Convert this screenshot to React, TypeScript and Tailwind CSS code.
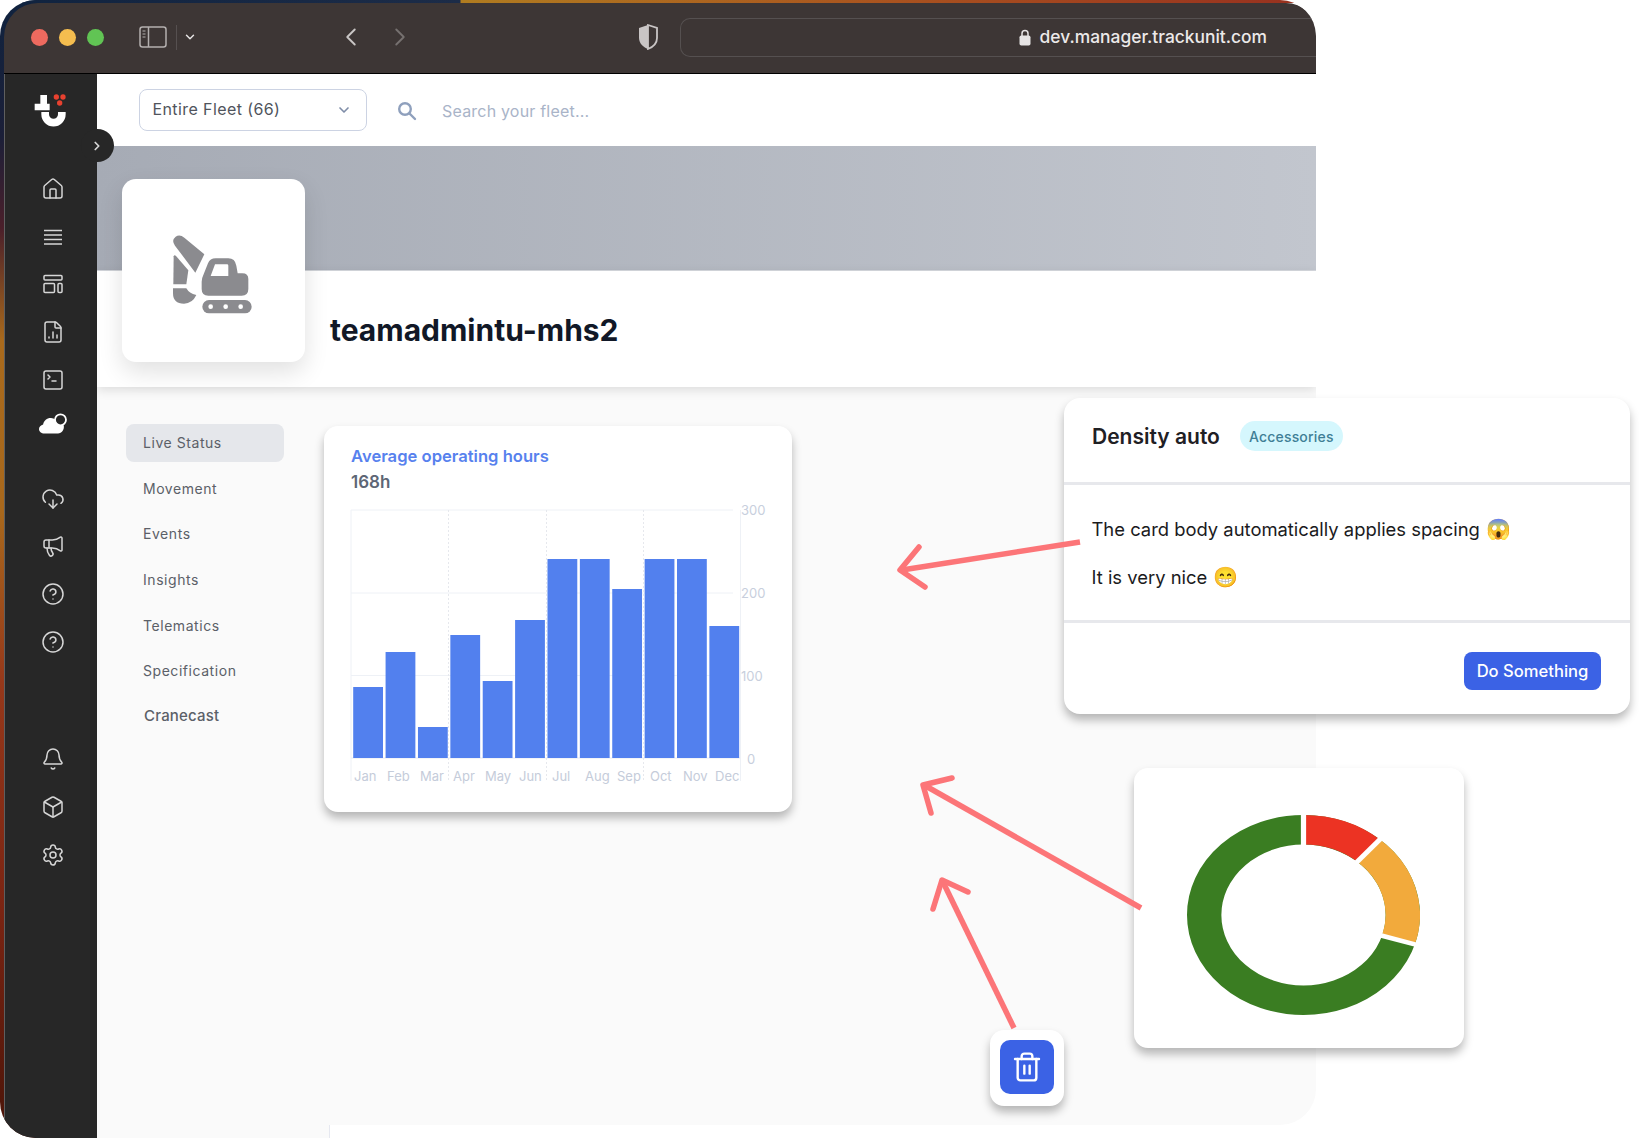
import {
  House,
  FileChartColumn,
  SquareTerminal,
  CloudDownload,
  Megaphone,
  CircleHelp,
  Bell,
  Box,
  Settings,
  ChevronDown,
  ChevronLeft,
  ChevronRight,
  Trash2,
} from "lucide-react";

const navItems = ["Movement", "Events", "Insights", "Telematics", "Specification"];

const bars = [71, 106, 31, 123, 77, 138, 199, 199, 169, 199, 199, 132];
const months = ["Jan", "Feb", "Mar", "Apr", "May", "Jun", "Jul", "Aug", "Sep", "Oct", "Nov", "Dec"];
const monthX = [354, 387, 420, 453, 485, 519, 552, 585, 617, 650, 683, 715];

const MenuLines = () => (
  <svg width="24" height="24" viewBox="0 0 24 24" fill="none" stroke="currentColor" strokeWidth="1.5">
    <path d="M3 5.5h18M3 10h18M3 14.5h18M3 19h18" />
  </svg>
);

const LayoutIcon = () => (
  <svg width="24" height="24" viewBox="0 0 24 24" fill="none" stroke="currentColor" strokeWidth="1.5">
    <rect x="3" y="3.5" width="18" height="4.5" rx="1" />
    <rect x="3" y="11.5" width="10.5" height="9" rx="1" />
    <rect x="17" y="11.5" width="4" height="9" rx="1" />
  </svg>
);

const CloudSun = () => (
  <svg width="30" height="24" viewBox="0 0 30 24" fill="none">
    <path
      d="M6.5 21.5C3.2 21.5 1 19.6 1 17c0-2.4 1.8-4 4.1-4.6C6 8.4 9.2 5.8 13 6c3.4.2 5.8 2.2 6.8 5 .8-.3 5.2-.3 6 2.8.7 3.6-2 7.7-5.8 7.7Z"
      fill="white"
    />
    <circle cx="22.5" cy="7.8" r="5.5" fill="#272727" stroke="white" strokeWidth="1.8" />
  </svg>
);

const Logo = () => (
  <svg width="40" height="40" viewBox="40 40 120 120">
    <path d="M62 46h20v26h8v20H45V72h17Z" fill="white" />
    <path d="M65 97H88V104A13.5 13.5 0 0 0 115 104V97H138V104A36.5 36.5 0 0 1 65 104Z" fill="white" />
    <circle cx="110" cy="52" r="8" fill="#e8412f" />
    <circle cx="130" cy="52" r="8" fill="#e8412f" />
    <circle cx="120" cy="70" r="8" fill="#e8412f" />
  </svg>
);

const Excavator = () => (
  <svg width="100" height="100" viewBox="0 0 300 300" fill="#8b8b8f">
    <path d="M48 62Q36 46 50 35Q62 26 76 38L136 88L109 143Z" />
    <path d="M44 94Q46 88 51 93L88 136L82 178H43Z" />
    <path d="M42 190H82Q90 205 112 210Q100 236 75 236Q42 236 42 205Z" />
    <path d="M128 170Q128 160 133 150L147 115Q153 100 170 100H208Q228 100 232 122L236 145H250Q268 145 268 162V192Q268 212 248 212H148Q128 212 128 192Z" />
    <path d="M168 118H204Q208 118 208 122V153H155Z" fill="white" />
    <rect x="130" y="225" width="148" height="40" rx="20" />
    <circle cx="155" cy="245" r="7" fill="white" />
    <circle cx="200" cy="245" r="7" fill="white" />
    <circle cx="245" cy="245" r="7" fill="white" />
  </svg>
);

const Sidebar = () => (
  <aside className="relative w-[93px] shrink-0 bg-[#272727] border-l border-[#5f5f5f] pl-[3px] flex flex-col items-center text-[#d6d6d6]">
    <div className="mt-[19px]">
      <Logo />
    </div>
    <div className="mt-[44px] flex flex-col items-center gap-[23.7px]">
      <House size={24} strokeWidth={1.5} />
      <MenuLines />
      <LayoutIcon />
      <FileChartColumn size={24} strokeWidth={1.5} />
      <SquareTerminal size={24} strokeWidth={1.5} />
    </div>
    <div className="mt-[20px] ml-[1px]">
      <CloudSun />
    </div>
    <div className="mt-[51px] flex flex-col items-center gap-[23.7px]">
      <CloudDownload size={24} strokeWidth={1.5} />
      <Megaphone size={24} strokeWidth={1.5} />
      <CircleHelp size={24} strokeWidth={1.5} />
      <CircleHelp size={24} strokeWidth={1.5} />
    </div>
    <div className="mt-[93.5px] flex flex-col items-center gap-[24px]">
      <Bell size={24} strokeWidth={1.5} />
      <Box size={24} strokeWidth={1.5} />
      <Settings size={24} strokeWidth={1.5} />
    </div>
  </aside>
);

const TitleBar = () => (
  <div className="ml-[4px] h-[71px] shrink-0 bg-[#3d3635] border-b border-black rounded-tl-[34px] rounded-tr-[30px] flex items-center pb-[2px] relative">
    <div className="ml-[27px] flex items-center gap-[11px]">
      <span className="w-[17px] h-[17px] rounded-full bg-[#ee6a5f]" />
      <span className="w-[17px] h-[17px] rounded-full bg-[#f5bd4f]" />
      <span className="w-[17px] h-[17px] rounded-full bg-[#61c454]" />
    </div>
    <svg className="ml-[35px]" width="28" height="22" viewBox="0 0 28 22" fill="none" stroke="#b4b0af" strokeWidth="1.5">
      <rect x="1" y="1" width="26" height="20" rx="2.5" />
      <path d="M9.5 1v20" />
      <path d="M3.5 5h3M3.5 8h3M3.5 11h3" strokeWidth="1.2" />
    </svg>
    <span className="ml-[9px] w-px h-[25px] bg-[#565050]" />
    <ChevronDown className="ml-[6px] text-[#e4e2e2]" size={14} strokeWidth={2.5} />
    <ChevronLeft className="ml-[139px] text-[#c9c6c5]" size={30} strokeWidth={1.5} />
    <ChevronRight className="ml-[19px] text-[#767170]" size={30} strokeWidth={1.5} />
    <svg className="ml-[222px]" width="22" height="26" viewBox="0 0 22 26">
      <path d="M11 1 2 4v10c0 5 4 9 9 11Z" fill="#c9c5c5" />
      <path d="M11 1l9 3v10c0 5-4 9-9 11Z" fill="none" stroke="#c9c5c5" strokeWidth="1.8" />
    </svg>
    <div className="ml-[21px] flex-1 h-[39px] border border-r-0 border-[#555050] rounded-l-[10px] flex items-center justify-end pr-[49px] gap-[9px]">
      <svg width="12" height="17" viewBox="0 0 12 17">
        <path d="M3 7V4.5a3 3 0 0 1 6 0V7" fill="none" stroke="#e6e4e4" strokeWidth="1.5" />
        <rect x="0.5" y="6.5" width="11" height="10" rx="1.8" fill="#e6e4e4" />
      </svg>
      <span className="mt-[1px] text-[17.4px] font-medium text-[#ece9e9]">dev.manager.trackunit.com</span>
    </div>
  </div>
);

const TopBar = () => (
  <div className="relative h-[72px] shrink-0 bg-white flex items-center pl-[42px]">
    <div className="w-[228px] h-[42px] mt-[-1px] border-[1.5px] border-[#ccd3e3] rounded-[8px] flex items-center justify-between pl-[12.5px] pr-[14px]">
      <span className="-mt-[1px] text-[16px] tracking-[0.4px] text-[#50545c]">Entire Fleet (66)</span>
      <ChevronDown className="text-[#7f8da8]" size={16} strokeWidth={2.5} />
    </div>
    <svg className="ml-[30px] mt-[2px]" width="20" height="20" viewBox="0 0 20 20" fill="none" stroke="#8fa0bd" strokeWidth="2.4">
      <circle cx="8" cy="8" r="5.8" />
      <path d="M12.5 12.5 18 18" strokeLinecap="round" />
    </svg>
    <span className="ml-[25px] mt-[2px] text-[16px] tracking-[0.2px] text-[#a9b4c8]">Search your fleet...</span>
  </div>
);

const BarChart = () => (
  <svg className="mt-[1px] ml-[16px]" width="450" height="295" viewBox="340 495 450 295" fontFamily="Inter, sans-serif" fontSize="13">
    {[510, 593, 675.5].map((y) => (
      <line key={y} x1="351" x2="733" y1={y} y2={y} stroke="#eef1f6" />
    ))}
    <line x1="351" x2="740" y1="758" y2="758" stroke="#e6eaf2" />
    <line x1="351" x2="351" y1="510" y2="781" stroke="#eef1f6" />
    <line x1="740.5" x2="740.5" y1="510" y2="781" stroke="#eef1f6" />
    {[448.5, 546.5, 643.5].map((x) => (
      <line key={x} x1={x} x2={x} y1="510" y2="781" stroke="#e6e8ed" strokeDasharray="2 2" />
    ))}
    {bars.map((h, i) => (
      <rect key={months[i]} x={353.2 + i * 32.38} y={758 - h} width="29.8" height={h} fill="#5280ee" />
    ))}
    {months.map((m, i) => (
      <text key={m} x={monthX[i]} y="781" fill="#c5ccda">
        {m}
      </text>
    ))}
    <text x="741" y="515" fill="#c8cfdd">300</text>
    <text x="741" y="598" fill="#c8cfdd">200</text>
    <text x="741" y="681" fill="#c8cfdd">100</text>
    <text x="747" y="764" fill="#c8cfdd">0</text>
  </svg>
);

const Donut = () => (
  <svg width="233" height="200" viewBox="0 0 200 200" preserveAspectRatio="none" fill="none">
    <circle cx="100" cy="100" r="85.25" stroke="#3a7d22" strokeWidth="29.5" />
    <path d="M100 14.75A85.25 85.25 0 0 1 155.9 35.6" stroke="#ec3323" strokeWidth="29.5" />
    <path d="M155.9 35.6A85.25 85.25 0 0 1 181.5 124.9" stroke="#f2aa3c" strokeWidth="29.5" />
    <g stroke="white" strokeWidth="4.5">
      <path d="M100 -2V32" />
      <path d="M144.6 48.5 169 20.4" />
      <path d="M165 120 198 130.2" />
    </g>
  </svg>
);

const Arrows = () => (
  <svg className="absolute inset-0 pointer-events-none" width="1639" height="1138" fill="none" stroke="#fc7578" strokeWidth="5.5" strokeLinecap="round" strokeLinejoin="round">
    <path d="M1080 542 902 570" strokeLinecap="butt" />
    <path d="M919 547 900 570 925 587" />
    <path d="M1141 908 924 785" strokeLinecap="butt" />
    <path d="M952 778 923 785 931 813" />
    <path d="M1014 1028 943 882" strokeLinecap="butt" />
    <path d="M968 892 942 880 933 909" />
  </svg>
);

export default function App() {
  return (
    <div className="relative w-[1639px] h-[1138px] bg-white overflow-hidden font-['Inter',sans-serif]">
      {/* browser window */}
      <div className="w-[1316px] h-[1138px] flex flex-col overflow-hidden rounded-t-[36px] rounded-bl-[36px] bg-no-repeat bg-[length:40px_100%] bg-[linear-gradient(180deg,#10233f_0%,#1b1f38_12%,#4a1f2a_20%,#a96a1c_30%,#a8681c_45%,#96381a_60%,#7a2412_80%,#4a1408_100%)]">
        <div className="h-[3px] shrink-0 bg-[linear-gradient(90deg,#10233f_0,#1c2c48_460px,#b07c20_461px,#a9521f_900px,#97301f_1316px)]" />
        <TitleBar />
        <div className="flex flex-1 pl-[4px] min-h-0">
          <Sidebar />
          <div className="relative w-[1219px] flex flex-col">
            <div className="h-[1051px] bg-[#fafafa] rounded-br-[36px] flex flex-col overflow-hidden">
              <TopBar />
              <div className="h-[125px] shrink-0 bg-[linear-gradient(90deg,#a6abb5,#c2c6ce)] border-b border-[#d5d8de]" />
              <div className="relative z-10 h-[116px] shrink-0 bg-white shadow-[0_3px_10px_rgba(0,0,0,0.12)] flex items-start">
                <div className="ml-[25px] -mt-[92px] w-[183px] h-[183px] shrink-0 bg-white rounded-[14px] shadow-[0_10px_25px_rgba(0,0,0,0.12)] flex items-center justify-center pr-[9px] pt-[8px]">
                  <Excavator />
                </div>
                <h1 className="ml-[25px] mt-[39px] text-[30px] leading-[40px] font-bold text-[#111827]">teamadmintu-mhs2</h1>
              </div>
              <div className="flex items-start">
                <nav className="ml-[29px] mt-[36.5px] w-[158px] flex flex-col gap-[7.7px] text-[14px] tracking-[0.55px] text-[#5b6068]">
                  <a className="h-[38px] rounded-[8px] bg-[#e5e7eb] pl-[17px] flex items-center">Live Status</a>
                  {navItems.map((item) => (
                    <a key={item} className="h-[38px] pl-[17px] flex items-center">
                      {item}
                    </a>
                  ))}
                  <a className="h-[38px] pl-[18px] flex items-center font-medium text-[15px] tracking-[0.2px]">Cranecast</a>
                </nav>
                <section className="ml-[40px] mt-[39px] w-[468px] h-[386px] bg-white rounded-[14px] shadow-[0_6px_10px_rgba(0,0,0,0.28)]">
                  <div className="pl-[27px] pt-[18px]">
                    <h2 className="text-[16.6px] leading-[24px] font-semibold text-[#5781ee]">Average operating hours</h2>
                    <p className="mt-[2px] text-[17px] leading-[24px] font-semibold text-[#5d6675]">168h</p>
                  </div>
                  <BarChart />
                </section>
              </div>
            </div>
            <div className="h-[13px] w-[233px] bg-[#fafafa] border-r border-[#e6e8f0]" />
            {/* sidebar collapse toggle */}
            <div className="absolute left-[-16.5px] top-[55px] z-20 w-[33px] h-[33px] rounded-full bg-[#272727] flex items-center justify-center pr-[1px] text-[#d6d6d6]">
              <ChevronRight size={14} strokeWidth={3} />
            </div>
          </div>
        </div>
      </div>

      {/* pasted cards */}
      <div className="absolute left-[1064px] top-[398px] w-[566px] h-[316px] bg-white rounded-[16px] shadow-[0_6px_10px_rgba(0,0,0,0.28)] flex flex-col">
        <div className="h-[87px] shrink-0 border-b-[3px] border-[#e7e8ec] flex items-center pl-[28px] pb-[7px] gap-[20px]">
          <h3 className="text-[21px] font-semibold text-[#1f2024]">Density auto</h3>
          <span className="h-[30px] px-[9px] -mt-[1px] rounded-full bg-[#d5f7fd] text-[14px] font-medium tracking-[0.2px] text-[#3f7f96] flex items-center">Accessories</span>
        </div>
        <div className="h-[138px] shrink-0 border-b-[3px] border-[#e7e8ec] pl-[27.5px] pt-[30px] flex flex-col gap-[20px] text-[18.4px] leading-[28px] text-[#1b1b1d]">
          <p>
            The card body automatically applies spacing <span className="ml-[1px] text-[20px] leading-none">😱</span>
          </p>
          <p>
            It is very nice <span className="ml-[1px] text-[20px] leading-none">😁</span>
          </p>
        </div>
        <div className="flex justify-end pr-[29px] pt-[29px]">
          <button className="w-[137px] h-[38px] rounded-[8px] bg-[#3b62e5] text-[16.6px] font-medium text-white">Do Something</button>
        </div>
      </div>

      <div className="absolute left-[1134px] top-[768px] w-[330px] h-[280px] bg-white rounded-[14px] shadow-[0_6px_10px_rgba(0,0,0,0.28)] pl-[53px] pt-[47px]">
        <Donut />
      </div>

      <div className="absolute left-[990px] top-[1030px] w-[74px] h-[76px] bg-white rounded-[14px] shadow-[0_6px_10px_rgba(0,0,0,0.28)] pl-[9.5px] pt-[10px]">
        <button className="w-[54px] h-[54px] rounded-[10px] bg-[#3b62e5] flex items-center justify-center text-white">
          <Trash2 size={32} strokeWidth={1.8} />
        </button>
      </div>

      <Arrows />
    </div>
  );
}
